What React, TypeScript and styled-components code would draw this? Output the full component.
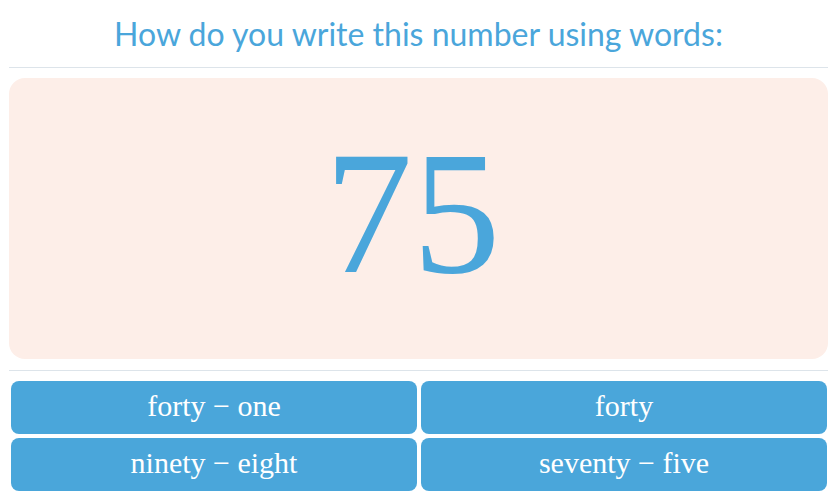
import React from "react";
import styled, { createGlobalStyle } from "styled-components";

const GlobalStyle = createGlobalStyle`
  body {
    margin: 0;
    background: #ffffff;
    font-family: "Liberation Serif", serif;
  }
`;

const Page = styled.div`
  width: 819px;
  padding: 0 12px 0 9px;
`;

const Title = styled.h1`
  margin: 0;
  height: 67px;
  display: flex;
  align-items: center;
  justify-content: center;
  font-family: Lato, "Open Sans", sans-serif;
  font-weight: 400;
  font-size: 32px;
  color: #4aa6db;
  border-bottom: 1px solid #dde4ea;
`;

const NumberCard = styled.div`
  margin-top: 10px;
  height: 281px;
  border-radius: 16px;
  background: #fdeee8;
  display: flex;
  align-items: center;
  justify-content: center;
  font-family: "Liberation Serif", serif;
  font-size: 176px;
  color: #4aa6db;
  padding: 0 12px 12px 0;
  box-sizing: border-box;
`;

const Divider = styled.hr`
  margin: 11px 0 10px;
  border: 0;
  border-top: 1px solid #dde4ea;
`;

const Answers = styled.div`
  display: grid;
  grid-template-columns: 1fr 1fr;
  gap: 4px;
  padding: 0 1px 0 2px;
`;

const Answer = styled.button`
  height: 53px;
  border: 0;
  border-radius: 8px;
  background: #4aa6da;
  color: #ffffff;
  font-family: "Liberation Serif", serif;
  font-size: 30px;
  cursor: pointer;
  padding: 0 0 3px;
`;

const options = ["forty \u2212 one", "forty", "ninety \u2212 eight", "seventy \u2212 five"];

export default function App() {
  return (
    <Page>
      <GlobalStyle />
      <Title>How do you write this number using words:</Title>
      <NumberCard>75</NumberCard>
      <Divider />
      <Answers>
        {options.map((o) => (
          <Answer key={o}>{o}</Answer>
        ))}
      </Answers>
    </Page>
  );
}
